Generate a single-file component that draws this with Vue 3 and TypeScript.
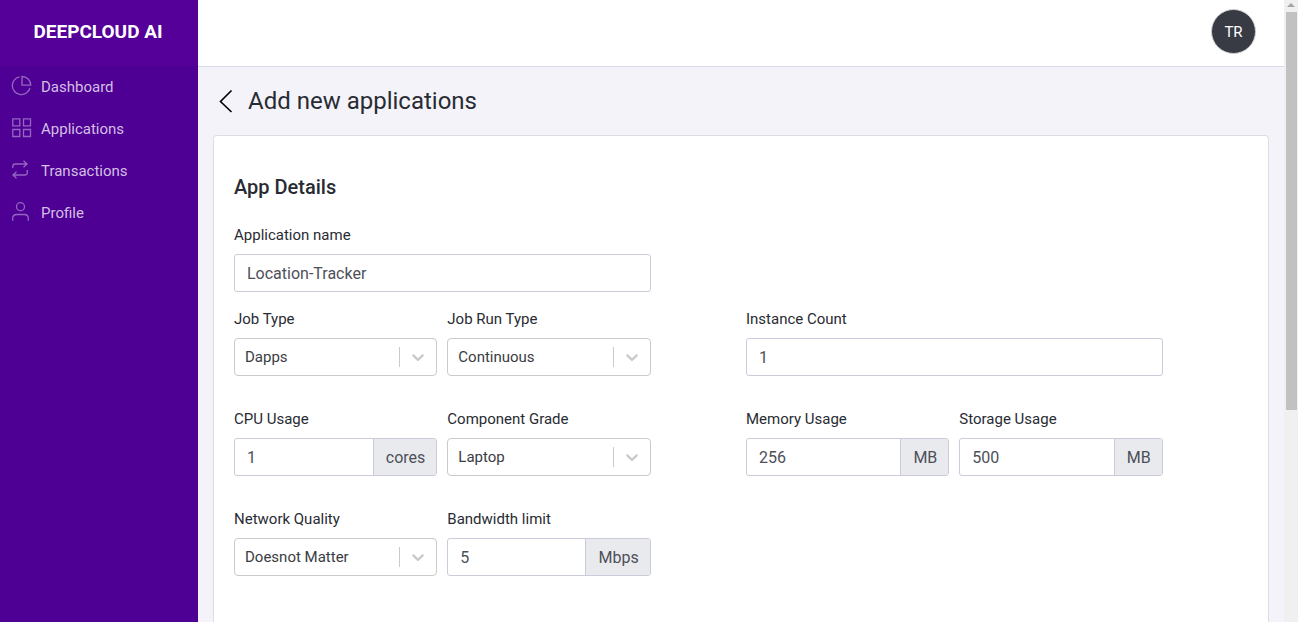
<script setup lang="ts">
import { reactive } from 'vue'

interface Field {
  id: string
  label: string
  kind: 'text' | 'select'
  unit?: string
  options?: string[]
}

interface Group {
  side: 'left' | 'right'
  fields: Field[]
}

const navItems = [
  { id: 'dashboard', label: 'Dashboard' },
  { id: 'applications', label: 'Applications' },
  { id: 'transactions', label: 'Transactions' },
  { id: 'profile', label: 'Profile' },
]

const groups: Group[] = [
  { side: 'left', fields: [{ id: 'name', label: 'Application name', kind: 'text' }] },
  {
    side: 'left',
    fields: [
      { id: 'jobType', label: 'Job Type', kind: 'select', options: ['Dapps'] },
      { id: 'runType', label: 'Job Run Type', kind: 'select', options: ['Continuous'] },
    ],
  },
  { side: 'right', fields: [{ id: 'instances', label: 'Instance Count', kind: 'text' }] },
  {
    side: 'left',
    fields: [
      { id: 'cpu', label: 'CPU Usage', kind: 'text', unit: 'cores' },
      { id: 'grade', label: 'Component Grade', kind: 'select', options: ['Laptop'] },
    ],
  },
  {
    side: 'right',
    fields: [
      { id: 'memory', label: 'Memory Usage', kind: 'text', unit: 'MB' },
      { id: 'storage', label: 'Storage Usage', kind: 'text', unit: 'MB' },
    ],
  },
  {
    side: 'left',
    fields: [
      { id: 'network', label: 'Network Quality', kind: 'select', options: ['Doesnot Matter'] },
      { id: 'bandwidth', label: 'Bandwidth limit', kind: 'text', unit: 'Mbps' },
    ],
  },
]

const form = reactive<Record<string, string>>({
  name: 'Location-Tracker',
  jobType: 'Dapps',
  runType: 'Continuous',
  instances: '1',
  cpu: '1',
  grade: 'Laptop',
  memory: '256',
  storage: '500',
  network: 'Doesnot Matter',
  bandwidth: '5',
})
</script>

<template>
  <div class="app">
    <aside class="sidebar">
      <a class="brand" href="#">DEEPCLOUD AI</a>
      <nav>
        <a v-for="item in navItems" :key="item.id" class="nav-link" href="#">
          <svg class="nav-icon" viewBox="0 0 20 20" aria-hidden="true">
            <template v-if="item.id === 'dashboard'">
              <path d="M7.5 .8A9 9 0 1 0 18 12" />
              <path d="M10 .5V9.200H18.700A8.700 8.700 0 0 0 10 .5Z" />
            </template>
            <template v-else-if="item.id === 'applications'">
              <path d="M.8 .8h7v7h-7zM11.500 .8h7v7h-7zM.8 11.500h7v7h-7zM11.500 11.500h7v7h-7z" />
            </template>
            <template v-else-if="item.id === 'transactions'">
              <path d="M.8 8V6.500Q.8 4 3.300 4H15M11.500 .8L15 4 11.500 7.300" />
              <path d="M15.300 10V12.500Q15.300 15 12.800 15H1M4.500 11.700L1 15 4.500 18.300" />
            </template>
            <template v-else>
              <circle cx="8.500" cy="4.700" r="4" />
              <path d="M.7 18.700V16.500Q.7 12.500 4.700 12.500H12.300Q16.300 12.500 16.300 16.500V18.700" />
            </template>
          </svg>
          <span>{{ item.label }}</span>
        </a>
      </nav>
    </aside>

    <div class="page">
      <header class="topbar">
        <button class="avatar" type="button">TR</button>
      </header>
      <main class="content">
        <div class="heading">
          <button class="back" type="button" aria-label="Back">
            <svg viewBox="0 0 14 24" aria-hidden="true"><path d="M12.500 1.500L1.500 12.500 12.500 23" /></svg>
          </button>
          <h1>Add new applications</h1>
        </div>
        <form class="card" @submit.prevent>
          <h2>App Details</h2>
          <div class="form-grid">
            <div
              v-for="(group, index) in groups"
              :key="index"
              class="group"
              :class="[group.side, { first: index === 0 }]"
            >
              <div v-for="field in group.fields" :key="field.id" class="field">
                <label :for="field.id">{{ field.label }}</label>
                <div v-if="field.kind === 'select'" class="select-box">
                  <select :id="field.id" v-model="form[field.id]">
                    <option v-for="option in field.options" :key="option">{{ option }}</option>
                  </select>
                  <span class="indicator">
                    <svg viewBox="0 0 20 20" aria-hidden="true">
                      <path d="M4.516 7.548c0.436-0.446 1.043-0.481 1.576 0l3.908 3.747 3.908-3.747c0.533-0.481 1.141-0.446 1.574 0 0.436 0.445 0.408 1.197 0 1.615-0.406 0.418-4.695 4.502-4.695 4.502-0.217 0.223-0.502 0.335-0.787 0.335s-0.57-0.112-0.789-0.335c0 0-4.287-4.084-4.695-4.502s-0.436-1.170 0-1.615z" />
                    </svg>
                  </span>
                </div>
                <div v-else class="input-box">
                  <input :id="field.id" v-model="form[field.id]" type="text" />
                  <span v-if="field.unit" class="unit">{{ field.unit }}</span>
                </div>
              </div>
            </div>
          </div>
        </form>
      </main>
    </div>

    <div class="scrollbar" aria-hidden="true">
      <span class="arrow"></span>
      <span class="thumb"></span>
    </div>
  </div>
</template>

<style>
body {
  margin: 0;
}
</style>

<style scoped>
* {
  box-sizing: border-box;
}
.app {
  display: flex;
  height: 100vh;
  overflow: hidden;
  background: #f4f3fa;
  color: #292b33;
  font-family: Roboto, "Liberation Sans", sans-serif;
  font-size: 15px;
}
button,
input,
select {
  font: inherit;
  color: inherit;
}
.sidebar {
  flex: 0 0 198px;
  background: #4e0094;
}
.brand {
  display: flex;
  align-items: center;
  justify-content: center;
  height: 66px;
  padding: 0 2px 4px 0;
  background: #550099;
  color: #fff;
  font-size: 19px;
  font-weight: 700;
  text-decoration: none;
  white-space: nowrap;
}
.nav-link {
  display: flex;
  align-items: center;
  gap: 9px;
  height: 42px;
  padding-left: 12px;
  color: #d3bfe4;
  text-decoration: none;
}
.nav-icon {
  width: 20px;
  height: 20px;
  margin-bottom: 2px;
  fill: none;
  stroke: #9466bf;
  stroke-width: 1.3;
  overflow: visible;
}
.page {
  display: flex;
  flex: 1;
  flex-direction: column;
  min-width: 0;
}
.topbar {
  display: flex;
  flex: 0 0 67px;
  align-items: center;
  justify-content: flex-end;
  padding: 0 28px 3px;
  background: #fff;
  border-bottom: 1px solid #d8dcea;
}
.avatar {
  width: 45px;
  height: 45px;
  padding: 0;
  border: 1px solid #d0d0d4;
  border-radius: 50%;
  background: #383a44;
  color: #fff;
}
.content {
  display: flex;
  flex: 1;
  flex-direction: column;
  padding: 0 15px;
}
.heading {
  display: flex;
  flex: 0 0 68px;
  align-items: center;
  gap: 15px;
  padding-left: 6px;
}
.back {
  display: flex;
  padding: 0;
  border: 0;
  background: none;
}
.back svg {
  width: 14px;
  height: 24px;
  fill: none;
  stroke: #000;
  stroke-width: 1.6;
}
h1,
h2 {
  margin: 0;
}
h1 {
  font-size: 24px;
  font-weight: 400;
  line-height: 32px;
}
.card {
  flex: 1 0 auto;
  padding: 39px 20px 40px;
  border: 1px solid #dcdde3;
  border-bottom: 0;
  border-radius: 4px 4px 0 0;
  background: #fff;
}
h2 {
  margin-bottom: 25px;
  font-size: 20px;
  font-weight: 500;
  line-height: 24px;
}
.form-grid {
  display: grid;
  grid-template-columns: repeat(12, minmax(0, 1fr));
  column-gap: 10px;
}
.group {
  display: flex;
  gap: 10px;
  margin-bottom: 32px;
}
.group.first {
  margin-bottom: 16px;
}
.left {
  grid-column: 1 / span 5;
}
.right {
  grid-column: 7 / span 5;
}
.field {
  flex: 1 1 0;
  min-width: 0;
}
label {
  display: block;
  margin-bottom: 8px;
  line-height: 22px;
}
.input-box {
  display: flex;
  height: 38px;
  border: 1px solid #cccbdb;
  border-radius: 3px;
  background: #fff;
  color: #4d5058;
  font-size: 16px;
  overflow: hidden;
}
.input-box input {
  flex: 1;
  min-width: 0;
  padding: 0 12px;
  border: 0;
  outline: 0;
  background: none;
}
.unit {
  display: flex;
  align-items: center;
  padding: 0 11px 0 12px;
  border-left: 1px solid #cccbdb;
  background: #e9eaee;
}
.select-box {
  display: grid;
  grid-template-columns: minmax(0, 1fr);
  height: 38px;
}
.select-box select,
.indicator {
  grid-area: 1 / 1;
}
.select-box select {
  padding: 0 40px 0 10px;
  border: 1px solid #cacaca;
  border-radius: 4px;
  background: #fff;
  color: #3a3c43;
  outline: 0;
  appearance: none;
}
.indicator {
  display: flex;
  align-items: center;
  justify-self: end;
  margin: 9px 1px;
  padding: 0 8px;
  border-left: 1px solid #cacaca;
  pointer-events: none;
}
.indicator svg {
  width: 20px;
  height: 20px;
  fill: #cacaca;
}
.scrollbar {
  display: flex;
  flex: 0 0 14px;
  flex-direction: column;
  align-items: center;
  background: #f0f0f0;
}
.arrow {
  margin: 3px 0 5px;
  border: 4px solid transparent;
  border-top: 0;
  border-bottom-color: #a3a3a3;
}
.thumb {
  width: 11px;
  height: 64%;
  background: #c1c1c1;
}
</style>
